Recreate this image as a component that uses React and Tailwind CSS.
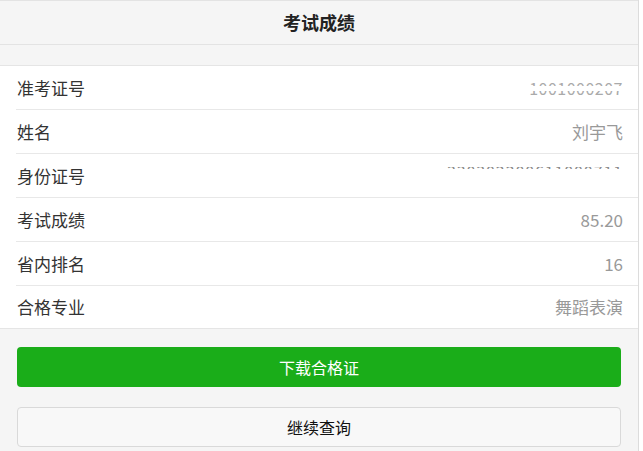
const ROWS = [
  { label: '准考证号', kind: 'ticket', value: '1001000207' },
  { label: '姓名', value: '刘宇飞' },
  { label: '身份证号', kind: 'id', value: '330302200611000711' },
  { label: '考试成绩', value: '85.20' },
  { label: '省内排名', value: '16' },
  { label: '合格专业', value: '舞蹈表演' },
]

const FONT = "font-['Noto_Sans_CJK_SC','Noto_Sans',sans-serif]"

function Value({ row }) {
  // number rendered half-broken in the source, fake it with a band / clip
  if (row.kind === 'ticket') {
    return (
      <span className="relative inline-block text-[16px] leading-[24px] tracking-[0.5px] text-[#aaa]">
        {row.value}
        <span className="absolute left-0 right-0 top-[10px] h-[5px] bg-white" />
      </span>
    )
  }
  if (row.kind === 'id') {
    return (
      <span className="h-[24px] flex items-start">
        <span className="block mt-[3px] h-[2px] overflow-hidden">
          <span className="block -mt-[8px] text-[16px] leading-[24px] tracking-[0.9px] text-[#888]">
            {row.value}
          </span>
        </span>
      </span>
    )
  }
  return <span className="text-[17px] leading-[24px] text-[#999]">{row.value}</span>
}

export default function App() {
  return (
    <div className={`flex w-[643px] h-[451px] overflow-hidden bg-[#f5f5f5] ${FONT}`}>
      <div className="flex-1 flex flex-col">
        {/* Title bar */}
        <div className="h-[45px] shrink-0 flex items-center justify-center border-t border-b border-[#e3e3e3] bg-[#f5f5f5]">
          <h1 className="text-[18px] font-bold text-[#222]">考试成绩</h1>
        </div>

        <div className="h-[20px] shrink-0" />

        {/* Info list */}
        <div className="bg-white border-t border-b border-[#e5e5e5]">
          {ROWS.map((row, i) => {
            const last = i === ROWS.length - 1
            return (
              <div key={row.label} className="pl-4">
                <div
                  className={[
                    'flex items-center justify-between pr-[15px]',
                    last ? 'h-[42px]' : 'h-[44px] border-b border-[#e8e8e8]',
                  ].join(' ')}
                >
                  <span className="text-[17px] text-[#333] pl-px">{row.label}</span>
                  <Value row={row} />
                </div>
              </div>
            )
          })}
        </div>

        {/* Actions */}
        <div className="flex flex-col gap-[20px] px-[17px] pt-[18px]">
          <button className="h-[40px] rounded-[4px] bg-[#1aad19] text-white text-[16px]">
            下载合格证
          </button>
          <button className="h-[40px] rounded-[4px] bg-[#f8f8f8] border border-[#d9d9d9] text-[#111] text-[16px]">
            继续查询
          </button>
        </div>
      </div>
      <div className="w-[5px] shrink-0 bg-white border-l border-[#dcdcdc]" />
    </div>
  )
}
